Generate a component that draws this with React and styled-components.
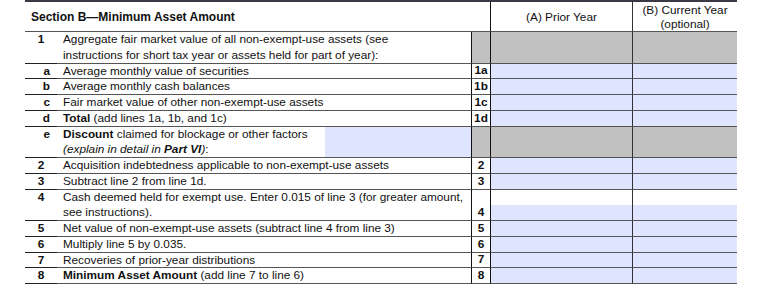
import React from 'react';
import styled, { createGlobalStyle } from 'styled-components';

const GlobalStyle = createGlobalStyle`
  html, body { margin: 0; padding: 0; background: #fff; }
  body { font-family: "Liberation Sans", Arial, sans-serif; color: #111; }
`;

const BLUE = '#dfe5ff';
const GRAY = '#c1c1c1';

const Page = styled.div`
  width: 760px;
  height: 287px;
  overflow: hidden;
  padding-left: 25px;
  box-sizing: border-box;
`;

const Table = styled.div`
  width: 712px;
  display: grid;
  grid-template-columns: 32px 414px 19px 142px 105px;
  border-top: 2px solid #3a3a44;
  font-size: 11.8px;
`;

const Title = styled.div`
  grid-column: 1 / 4;
  height: 29px;
  border-bottom: 1.5px solid #555;
  display: flex;
  align-items: center;
  padding-left: 6px;
  font-weight: bold;
  font-size: 12px;
`;

const ColHead = styled.div`
  height: 29px;
  border-bottom: 1.5px solid #555;
  border-left: 1.5px solid ${p => (p.$soft ? '#333' : '#111')};
  display: flex;
  flex-direction: column;
  align-items: center;
  justify-content: center;
  text-align: center;
  line-height: 14px;
`;

const Num = styled.div`
  height: ${p => (p.$tall ? 30.5 : 14.75)}px;
  border-bottom: 1px solid #222;
  font-weight: bold;
  display: flex;
  align-items: flex-start;
  justify-content: ${p => (p.$sub ? 'flex-end' : 'center')};
  padding-right: ${p => (p.$sub ? 7 : 0)}px;
  line-height: 15px;
`;

const Desc = styled.div`
  height: ${p => (p.$tall ? 30.5 : 14.75)}px;
  border-bottom: 1px solid #555;
  padding-left: 6px;
  display: flex;
  justify-content: space-between;
  line-height: 15.5px;
  white-space: nowrap;
`;

const Field = styled.div`
  width: 146px;
  background: ${BLUE};
  height: 100%;
`;

const LineNo = styled.div`
  height: ${p => (p.$tall ? 30.5 : 14.75)}px;
  border-bottom: 1px solid #555;
  border-left: 1.5px solid #111;
  background: ${p => (p.$shade ? GRAY : 'transparent')};
  font-weight: bold;
  display: flex;
  align-items: flex-end;
  justify-content: center;
  line-height: 15px;
`;

const Cell = styled.div`
  height: ${p => (p.$tall ? 30.5 : 14.75)}px;
  border-bottom: 1px solid #555;
  border-left: 1.5px solid ${p => (p.$soft ? '#333' : '#111')};
  background: ${p =>
    p.$shade
      ? GRAY
      : p.$split
      ? `linear-gradient(to bottom, #fff 0, #fff 15.5px, ${BLUE} 15.5px)`
      : BLUE};
`;

const rows = [
  { n: '1', tall: true, shade: true, text: (
    <span>Aggregate fair market value of all non-exempt-use assets (see<br />instructions for short tax year or assets held for part of year):</span>
  ) },
  { n: 'a', sub: true, line: '1a', text: 'Average monthly value of securities' },
  { n: 'b', sub: true, line: '1b', text: 'Average monthly cash balances' },
  { n: 'c', sub: true, line: '1c', text: 'Fair market value of other non-exempt-use assets' },
  { n: 'd', sub: true, line: '1d', text: <span><b>Total</b> (add lines 1a, 1b, and 1c)</span> },
  { n: 'e', sub: true, tall: true, shade: true, field: true, text: (
    <span><b>Discount</b> claimed for blockage or other factors<br /><i>(explain in detail in <b>Part VI</b>)</i>:</span>
  ) },
  { n: '2', line: '2', text: 'Acquisition indebtedness applicable to non-exempt-use assets' },
  { n: '3', line: '3', text: 'Subtract line 2 from line 1d.' },
  { n: '4', line: '4', tall: true, split: true, text: (
    <span>Cash deemed held for exempt use. Enter 0.015 of line 3 (for greater amount,<br />see instructions).</span>
  ) },
  { n: '5', line: '5', text: 'Net value of non-exempt-use assets (subtract line 4 from line 3)' },
  { n: '6', line: '6', text: 'Multiply line 5 by 0.035.' },
  { n: '7', line: '7', text: 'Recoveries of prior-year distributions' },
  { n: '8', line: '8', text: <span><b>Minimum Asset Amount</b> (add line 7 to line 6)</span> },
];

export default function App() {
  return (
    <Page>
      <GlobalStyle />
      <Table>
        <Title>Section B—Minimum Asset Amount</Title>
        <ColHead>(A) Prior Year</ColHead>
        <ColHead $soft>
          <span>(B) Current Year</span>
          <span>(optional)</span>
        </ColHead>
        {rows.map((r, i) => (
          <React.Fragment key={i}>
            <Num $tall={r.tall} $sub={r.sub}>{r.n}</Num>
            <Desc $tall={r.tall}>
              {r.text}
              {r.field && <Field />}
            </Desc>
            <LineNo $tall={r.tall} $shade={r.shade}>{r.line}</LineNo>
            <Cell $tall={r.tall} $shade={r.shade} $split={r.split} />
            <Cell $tall={r.tall} $shade={r.shade} $split={r.split} $soft />
          </React.Fragment>
        ))}
      </Table>
    </Page>
  );
}
